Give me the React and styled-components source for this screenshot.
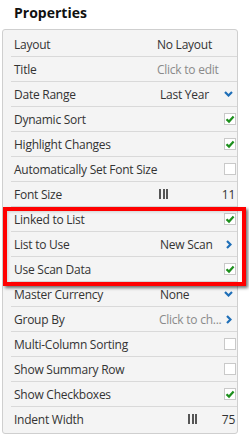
import React from 'react'
import styled, { createGlobalStyle } from 'styled-components'

const GlobalStyle = createGlobalStyle`
  body {
    margin: 0;
    background: #ffffff;
    font-family: "Open Sans", "Liberation Sans", sans-serif;
  }
`

const Page = styled.div`
  position: relative;
  width: 249px;
  height: 438px;
  background: #ffffff;
`

const Title = styled.h2`
  margin: 0;
  height: 29px;
  padding: 2px 0 0 14px;
  box-sizing: border-box;
  font-size: 14px;
  font-weight: 700;
  line-height: 22px;
  color: #111;
`

const Panel = styled.div`
  margin-left: 2px;
  width: 236px;
  box-sizing: border-box;
  border: 1px solid #cfcfcf;
  border-radius: 3px;
  background: #f4f4f4;
  padding: 2px 0 1px;
`

const Row = styled.div`
  display: flex;
  align-items: center;
  height: 24px;
  margin-left: 8px;
  padding-left: 3px;
  border-bottom: 1px solid ${(p) => (p.last ? 'transparent' : '#d9d9d9')};
  font-size: 12px;
  color: #333;
  letter-spacing: -0.25px;
`

const Label = styled.span`
  flex: 1;
  white-space: nowrap;
`

const ValueArea = styled.div`
  display: flex;
  align-items: center;
  width: 80px;
  padding-left: ${(p) => p.indent || 0}px;
  padding-right: ${(p) => p.right || 1}px;
  box-sizing: border-box;
`

const Value = styled.span`
  flex: 1;
  white-space: nowrap;
  color: ${(p) => (p.muted ? '#8a8a8a' : '#333')};
`

const Number = styled.span`
  margin-left: auto;
`

const Box = styled.span`
  display: inline-flex;
  align-items: center;
  justify-content: center;
  width: 12px;
  height: 12px;
  margin-left: auto;
  box-sizing: border-box;
  border: 1px solid #c9c9c9;
  background: #ffffff;
`

const Slider = styled.span`
  display: inline-flex;
  gap: 1.5px;
  margin-left: ${(p) => p.offset}px;
  span {
    display: block;
    width: 2px;
    height: 10px;
    background: #555;
  }
`

const Highlight = styled.div`
  position: absolute;
  left: 3px;
  top: 207px;
  width: 243px;
  height: 79px;
  box-sizing: border-box;
  border: 4px solid #ff0000;
  box-shadow: 2px 2px 3px rgba(0, 0, 0, 0.55), inset 1px 1px 3px rgba(0, 0, 0, 0.15);
  pointer-events: none;
`

const Check = () => (
  <svg width="10" height="10" viewBox="0 0 10 10">
    <path d="M1.5 5.2 L4 7.6 L8.6 2.6" fill="none" stroke="#1d8f1d" strokeWidth="2.2" />
  </svg>
)

const ChevronDown = () => (
  <svg width="9" height="6" viewBox="0 0 9 6" style={{ marginRight: 3 }}>
    <path d="M1 1 L4.5 4.5 L8 1" fill="none" stroke="#1f6fb8" strokeWidth="2.2" />
  </svg>
)

const ChevronRight = () => (
  <svg width="6" height="9" viewBox="0 0 6 9" style={{ marginRight: 4 }}>
    <path d="M1 1 L4.5 4.5 L1 8" fill="none" stroke="#1f6fb8" strokeWidth="2.2" />
  </svg>
)

const CheckRow = ({ label, checked, last }) => (
  <Row last={last}>
    <Label>{label}</Label>
    <ValueArea>
      <Box>{checked && <Check />}</Box>
    </ValueArea>
  </Row>
)

const SliderRow = ({ label, value, offset }) => (
  <Row>
    <Label>{label}</Label>
    <ValueArea right={2}>
      <Slider offset={offset}>
        <span />
        <span />
        <span />
      </Slider>
      <Number>{value}</Number>
    </ValueArea>
  </Row>
)

const App = () => (
  <Page>
    <GlobalStyle />
    <Title>Properties</Title>
    <Panel>
      <Row>
        <Label>Layout</Label>
        <ValueArea>
          <Value>No Layout</Value>
        </ValueArea>
      </Row>
      <Row>
        <Label>Title</Label>
        <ValueArea>
          <Value muted>Click to edit</Value>
        </ValueArea>
      </Row>
      <Row>
        <Label>Date Range</Label>
        <ValueArea indent={3}>
          <Value>Last Year</Value>
          <ChevronDown />
        </ValueArea>
      </Row>
      <CheckRow label="Dynamic Sort" checked />
      <CheckRow label="Highlight Changes" checked />
      <CheckRow label="Automatically Set Font Size" />
      <Row>
        <Label>Font Size</Label>
        <ValueArea right={2}>
          <Slider offset={2}>
            <span />
            <span />
            <span />
          </Slider>
          <Number>11</Number>
        </ValueArea>
      </Row>
      <CheckRow label="Linked to List" checked />
      <Row>
        <Label>List to Use</Label>
        <ValueArea indent={3}>
          <Value>New Scan</Value>
          <ChevronRight />
        </ValueArea>
      </Row>
      <CheckRow label="Use Scan Data" checked />
      <Row>
        <Label>Master Currency</Label>
        <ValueArea indent={3}>
          <Value>None</Value>
          <ChevronDown />
        </ValueArea>
      </Row>
      <Row>
        <Label>Group By</Label>
        <ValueArea indent={2}>
          <Value muted>Click to ch...</Value>
          <ChevronRight />
        </ValueArea>
      </Row>
      <CheckRow label="Multi-Column Sorting" />
      <CheckRow label="Show Summary Row" />
      <CheckRow label="Show Checkboxes" checked />
      <Row last>
        <Label>Indent Width</Label>
        <ValueArea right={2}>
          <Slider offset={31}>
            <span />
            <span />
            <span />
          </Slider>
          <Number>75</Number>
        </ValueArea>
      </Row>
    </Panel>
    <Highlight />
  </Page>
)

export default App
